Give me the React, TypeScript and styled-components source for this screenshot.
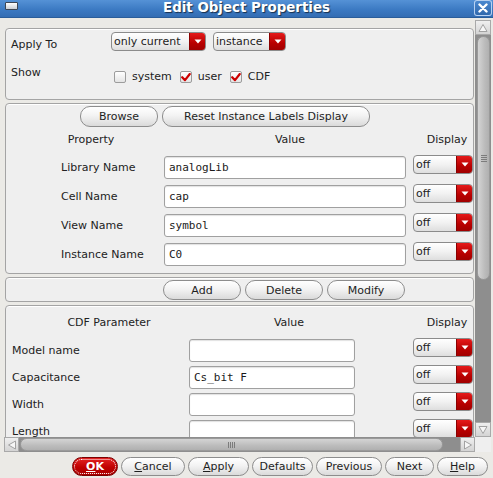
import React from "react";
import styled, { createGlobalStyle } from "styled-components";

const GlobalStyle = createGlobalStyle`
  html, body { margin: 0; padding: 0; background: #ebeae6; }
  body { font-family: "DejaVu Sans", "Noto Sans", sans-serif; font-size: 11px; color: #202020; }
  #root { width: 493px; height: 478px; }
  * { box-sizing: border-box; }
`;

const Window = styled.div`
  width: 493px;
  height: 478px;
  display: flex;
  flex-direction: column;
  background: #ebeae6;
  overflow: hidden;
`;

const TitleBar = styled.header`
  flex: none;
  height: 18px;
  display: grid;
  grid-template-columns: 24px 1fr 24px;
  align-items: start;
  background: linear-gradient(#5592d6, #3c7ac3 55%, #346db3);
  border-bottom: 1px solid #2a5d9a;
`;

const WindowIcon = styled.span`
  justify-self: start;
  margin: 2px 0 0 5px;
  width: 13px;
  height: 8px;
  border: 1px solid #3d4654;
  border-radius: 1px;
  background: linear-gradient(#ffffff, #c9ced5);
`;

const Title = styled.h1`
  margin: 0;
  text-align: center;
  color: #ffffff;
  font: bold 13.4px "DejaVu Sans", sans-serif;
  line-height: 16px;
  text-shadow: 1px 1px 1px rgba(0, 0, 0, 0.6);
  white-space: nowrap;
`;

const CloseButton = styled.span`
  justify-self: end;
  margin-right: 1px;
  width: 18px;
  height: 16px;
  border: 1px solid rgba(205, 225, 250, 0.85);
  border-radius: 3px;
  background: linear-gradient(#4a88cf, #3169ad);
  display: flex;
  align-items: center;
  justify-content: center;
`;

const Body = styled.div`
  flex: 1;
  min-height: 0;
  display: flex;
  flex-direction: column;
  padding: 2px 2px 2px 4px;
`;

const ScrollArea = styled.div`
  flex: 1;
  min-height: 0;
  display: grid;
  grid-template-columns: 1fr 16px;
  grid-template-rows: 1fr 15px;
`;

const Viewport = styled.div`
  grid-column: 1;
  grid-row: 1;
  overflow: hidden;
  min-height: 0;
`;

const Content = styled.div`
  display: flex;
  flex-direction: column;
  gap: 3px;
  padding: 8px 1px 0 1px;
`;

const Frame = styled.section<{ $pad: string }>`
  border: 1px solid #a4a4a4;
  border-radius: 4px;
  background: #efefef;
  box-shadow: inset 0 1px 0 #ffffff;
  padding: ${(p) => p.$pad};
`;

const ApplyGrid = styled.div`
  display: grid;
  grid-template-columns: 100px auto;
  row-gap: 14px;
  padding-left: 5px;
  align-items: start;
`;

const FieldLabel = styled.span<{ $top: number }>`
  line-height: 14px;
  padding-top: ${(p) => p.$top}px;
  color: #222;
  white-space: nowrap;
`;

const ComboRow = styled.div`
  display: flex;
  gap: 7px;
`;

const ComboBox = styled.div<{ $w: number }>`
  width: ${(p) => p.$w}px;
  height: 19px;
  display: flex;
  border: 1px solid #8b8b8b;
  border-radius: 4px;
  background: linear-gradient(#ffffff, #f2f2f2 50%, #dedede);
  overflow: hidden;
`;

const ComboText = styled.span`
  flex: 1;
  padding-left: 2px;
  line-height: 17px;
  white-space: nowrap;
  overflow: hidden;
  color: #222;
`;

const ComboArrow = styled.span`
  flex: none;
  width: 16px;
  display: flex;
  align-items: center;
  justify-content: center;
  background: linear-gradient(#e51a1a, #b80000 60%, #a00000);
  border-left: 1px solid #8a0000;
`;

const CheckRow = styled.div`
  display: flex;
  align-items: center;
  gap: 8px;
  padding: 4px 0 0 3px;
`;

const CheckItem = styled.label`
  display: flex;
  align-items: center;
  gap: 6px;
  line-height: 14px;
  color: #222;
`;

const CheckBox = styled.span`
  width: 12px;
  height: 12px;
  border: 1px solid #9c9c9c;
  border-radius: 2px;
  background: linear-gradient(#ffffff, #e4e4e4);
  display: flex;
  align-items: center;
  justify-content: center;
`;

const ButtonRow = styled.div<{ $pl: number }>`
  display: flex;
  gap: 4px;
  padding-left: ${(p) => p.$pl}px;
`;

const PillButton = styled.button<{ $w: number; $h: number }>`
  width: ${(p) => p.$w}px;
  height: ${(p) => p.$h}px;
  padding: 0;
  border: 1px solid #8d8d8d;
  border-radius: 10px;
  background: linear-gradient(#ffffff, #f3f3f3 45%, #dadada);
  font: 11px "DejaVu Sans", sans-serif;
  color: #1e1e1e;
  white-space: nowrap;
  cursor: default;
`;

const DefaultButton = styled(PillButton)`
  border-color: #7a0000;
  background: linear-gradient(#e42424, #c00000 55%, #a80000);
  color: #ffffff;
  font-weight: bold;
  outline: 1px dotted #ffffff;
  outline-offset: -3px;
`;

const HeaderRow = styled.div<{ $cols: string; $pl: number; $mt: number }>`
  display: grid;
  grid-template-columns: ${(p) => p.$cols};
  padding-left: ${(p) => p.$pl}px;
  margin-top: ${(p) => p.$mt}px;
  line-height: 14px;
  color: #222;
`;

const HeaderCell = styled.span<{ $pl?: number; $pr?: number }>`
  text-align: center;
  padding-left: ${(p) => p.$pl ?? 0}px;
  padding-right: ${(p) => p.$pr ?? 0}px;
  white-space: nowrap;
`;

const FieldGrid = styled.div<{ $cols: string; $pl: number; $gap: number; $pb: number }>`
  display: grid;
  grid-template-columns: ${(p) => p.$cols};
  row-gap: ${(p) => p.$gap}px;
  padding-left: ${(p) => p.$pl}px;
  padding-bottom: ${(p) => p.$pb}px;
  margin-top: 9px;
  align-items: center;
`;

const RowLabel = styled.span`
  line-height: 14px;
  color: #222;
  white-space: nowrap;
`;

const TextField = styled.input`
  width: 100%;
  height: 23px;
  margin: 0;
  padding: 0 4px;
  border: 1px solid #a0a0a0;
  border-radius: 3px;
  background: #ffffff;
  box-shadow: inset 0 1px 1px rgba(0, 0, 0, 0.12);
  font: 11px "DejaVu Sans Mono", monospace;
  color: #1a1a1a;
  outline: none;
`;

const DisplayCell = styled.div`
  justify-self: end;
  align-self: start;
  margin-top: -1px;
`;

const VScroll = styled.div`
  grid-column: 2;
  grid-row: 1;
  display: flex;
  flex-direction: column;
  background: #8e8e8e;
  min-height: 0;
`;

const HScroll = styled.div`
  grid-column: 1;
  grid-row: 2;
  display: flex;
  background: #8e8e8e;
`;

const Corner = styled.div`
  grid-column: 2;
  grid-row: 2;
  background: #efefef;
`;

const ScrollArrow = styled.div`
  flex: none;
  width: 15px;
  height: 15px;
  display: flex;
  align-items: center;
  justify-content: center;
  border: 1px solid #a9a9a9;
  background: linear-gradient(#efefef, #d4d4d4);
`;

const VArrow = styled(ScrollArrow)`
  width: 16px;
`;

const VThumb = styled.div<{ $len: number }>`
  flex: none;
  height: ${(p) => p.$len}px;
  margin: 1px 1px 0 2px;
  border: 1px solid #9a9a9a;
  border-radius: 7px;
  background: linear-gradient(90deg, #d4d4d4, #bcbcbc 60%, #b0b0b0);
  display: flex;
  align-items: center;
  justify-content: center;
`;

const HThumb = styled.div<{ $len: number }>`
  flex: none;
  width: ${(p) => p.$len}px;
  margin: 1px 0 1px 1px;
  border: 1px solid #9a9a9a;
  border-radius: 7px;
  background: linear-gradient(#d4d4d4, #bcbcbc 60%, #b0b0b0);
  display: flex;
  align-items: center;
  justify-content: center;
`;

const Trough = styled.div`
  flex: 1;
`;

const GripV = styled.span`
  width: 6px;
  height: 7px;
  background: repeating-linear-gradient(180deg, #7c7c7c 0 1px, transparent 1px 2px);
`;

const GripH = styled.span`
  width: 7px;
  height: 6px;
  background: repeating-linear-gradient(90deg, #7c7c7c 0 1px, transparent 1px 2px);
`;

const ButtonBar = styled.footer`
  flex: none;
  height: 19px;
  margin-top: 5px;
  display: flex;
  justify-content: flex-end;
  gap: 3px;
  padding-right: 3px;
`;

const Mnemonic = styled.u`
  text-decoration: underline;
  text-underline-offset: 1px;
`;

const DownTriangle = () => (
  <svg width="8" height="5" viewBox="0 0 8 5">
    <polygon points="0.5,0.5 7.5,0.5 4,4.5" fill="#ffffff" />
  </svg>
);

const CheckMark = () => (
  <svg width="10" height="9" viewBox="0 0 10 9">
    <path d="M1.2 4.2 L4 7.2 L8.8 1" fill="none" stroke="#cc0000" strokeWidth="2.2" strokeLinecap="round" strokeLinejoin="round" />
  </svg>
);

const ScrollTriangle = ({ dir }: { dir: "up" | "down" | "left" | "right" }) => {
  const pts = {
    up: "5,1.5 9,8.5 1,8.5",
    down: "1,1.5 9,1.5 5,8.5",
    left: "1.5,5 8.5,1 8.5,9",
    right: "1.5,1 8.5,5 1.5,9",
  }[dir];
  return (
    <svg width="10" height="10" viewBox="0 0 10 10">
      <polygon points={pts} fill="#f6f6f6" stroke="#a2a2a2" strokeWidth="1" strokeLinejoin="round" />
    </svg>
  );
};

const Combo = ({ label, w }: { label: string; w: number }) => (
  <ComboBox $w={w}>
    <ComboText>{label}</ComboText>
    <ComboArrow>
      <DownTriangle />
    </ComboArrow>
  </ComboBox>
);

const Check = ({ label, checked }: { label: string; checked: boolean }) => (
  <CheckItem>
    <CheckBox>{checked && <CheckMark />}</CheckBox>
    {label}
  </CheckItem>
);

const instanceProps = [
  { name: "Library Name", value: "analogLib" },
  { name: "Cell Name", value: "cap" },
  { name: "View Name", value: "symbol" },
  { name: "Instance Name", value: "C0" },
];

const cdfParams = [
  { name: "Model name", value: "" },
  { name: "Capacitance", value: "Cs_bit F" },
  { name: "Width", value: "" },
  { name: "Length", value: "" },
];

const PROP_COLS = "103px 242px 1fr";
const CDF_COLS = "177px 166px 1fr";

export default function App() {
  return (
    <>
      <GlobalStyle />
      <Window>
        <TitleBar>
          <WindowIcon />
          <Title>Edit Object Properties</Title>
          <CloseButton>
            <svg width="10" height="10" viewBox="0 0 10 10">
              <path d="M1.5 1.5 L8.5 8.5 M8.5 1.5 L1.5 8.5" stroke="#ffffff" strokeWidth="2.4" strokeLinecap="round" />
            </svg>
          </CloseButton>
        </TitleBar>
        <Body>
          <ScrollArea>
            <Viewport>
              <Content>
                <Frame $pad="3px 0 15px 0">
                  <ApplyGrid>
                    <FieldLabel $top={6}>Apply To</FieldLabel>
                    <ComboRow>
                      <Combo label="only current" w={95} />
                      <Combo label="instance" w={73} />
                    </ComboRow>
                    <FieldLabel $top={0}>Show</FieldLabel>
                    <CheckRow>
                      <Check label="system" checked={false} />
                      <Check label="user" checked />
                      <Check label="CDF" checked />
                    </CheckRow>
                  </ApplyGrid>
                </Frame>

                <Frame $pad="2px 0 7px 0">
                  <ButtonRow $pl={74}>
                    <PillButton $w={78} $h={21}>Browse</PillButton>
                    <PillButton $w={208} $h={21}>Reset Instance Labels Display</PillButton>
                  </ButtonRow>
                  <HeaderRow $cols={PROP_COLS} $pl={55} $mt={6}>
                    <HeaderCell $pr={43}>Property</HeaderCell>
                    <HeaderCell $pl={10}>Value</HeaderCell>
                    <HeaderCell $pl={15}>Display</HeaderCell>
                  </HeaderRow>
                  <FieldGrid $cols={PROP_COLS} $pl={55} $gap={6} $pb={0}>
                    {instanceProps.map((p) => (
                      <React.Fragment key={p.name}>
                        <RowLabel>{p.name}</RowLabel>
                        <TextField readOnly defaultValue={p.value} />
                        <DisplayCell>
                          <Combo label="off" w={60} />
                        </DisplayCell>
                      </React.Fragment>
                    ))}
                  </FieldGrid>
                </Frame>

                <Frame $pad="2px 0 1px 0">
                  <ButtonRow $pl={157}>
                    <PillButton $w={78} $h={20}>Add</PillButton>
                    <PillButton $w={78} $h={20}>Delete</PillButton>
                    <PillButton $w={78} $h={20}>Modify</PillButton>
                  </ButtonRow>
                </Frame>

                <Frame $pad="10px 0 10px 0">
                  <HeaderRow $cols={CDF_COLS} $pl={6} $mt={0}>
                    <HeaderCell $pl={17}>CDF Parameter</HeaderCell>
                    <HeaderCell $pl={34}>Value</HeaderCell>
                    <HeaderCell $pl={66}>Display</HeaderCell>
                  </HeaderRow>
                  <FieldGrid $cols={CDF_COLS} $pl={6} $gap={4} $pb={0}>
                    {cdfParams.map((p) => (
                      <React.Fragment key={p.name}>
                        <RowLabel>{p.name}</RowLabel>
                        <TextField readOnly defaultValue={p.value} />
                        <DisplayCell>
                          <Combo label="off" w={60} />
                        </DisplayCell>
                      </React.Fragment>
                    ))}
                  </FieldGrid>
                </Frame>
              </Content>
            </Viewport>

            <VScroll>
              <VArrow>
                <ScrollTriangle dir="up" />
              </VArrow>
              <VThumb $len={244}>
                <GripV />
              </VThumb>
              <Trough />
              <VArrow>
                <ScrollTriangle dir="down" />
              </VArrow>
            </VScroll>

            <HScroll>
              <ScrollArrow>
                <ScrollTriangle dir="left" />
              </ScrollArrow>
              <HThumb $len={423}>
                <GripH />
              </HThumb>
              <Trough />
              <ScrollArrow>
                <ScrollTriangle dir="right" />
              </ScrollArrow>
            </HScroll>
            <Corner />
          </ScrollArea>

          <ButtonBar>
            <DefaultButton $w={46} $h={19}>
              <Mnemonic>O</Mnemonic>K
            </DefaultButton>
            <PillButton $w={64} $h={19}>
              <Mnemonic>C</Mnemonic>ancel
            </PillButton>
            <PillButton $w={61} $h={19}>
              <Mnemonic>A</Mnemonic>pply
            </PillButton>
            <PillButton $w={61} $h={19}>Defaults</PillButton>
            <PillButton $w={66} $h={19}>Previous</PillButton>
            <PillButton $w={49} $h={19}>Next</PillButton>
            <PillButton $w={51} $h={19}>
              <Mnemonic>H</Mnemonic>elp
            </PillButton>
          </ButtonBar>
        </Body>
      </Window>
    </>
  );
}
